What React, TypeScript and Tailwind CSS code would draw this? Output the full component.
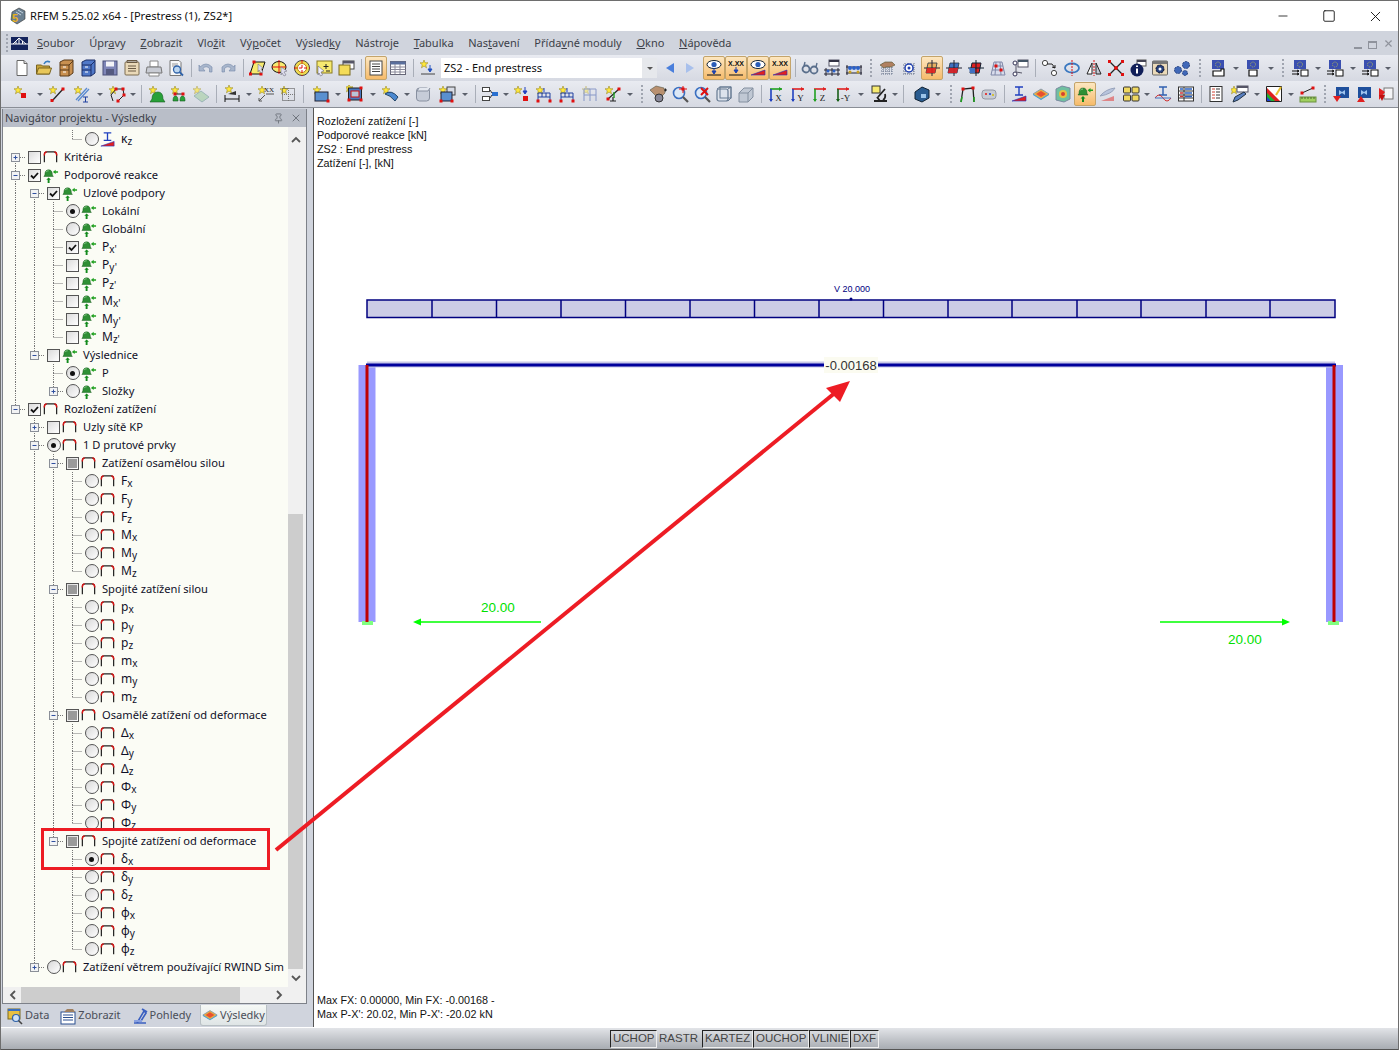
import type { ReactNode } from "react"
import { Minus, Square, X, Pin } from "lucide-react"

const Star = ({ x = 4, y = 4 }: { x?: number; y?: number }) => (
  <polygon
    points="0,-4 1,-1.2 4,-1.2 1.7,0.8 2.5,3.8 0,2 -2.5,3.8 -1.7,0.8 -4,-1.2 -1,-1.2"
    transform={`translate(${x} ${y})`}
    fill="#ffe83a"
    stroke="#9a8a20"
    strokeWidth="0.6"
  />
)
const Dot = ({ x, y }: { x: number; y: number }) => <rect x={x - 1.5} y={y - 1.5} width="3" height="3" fill="#e01010" />
const Flag = () => (
  <>
    <rect x="3" y="1" width="12" height="9" fill="#3a4fb0" />
    <circle cx="9" cy="5.5" r="2.5" fill="none" stroke="#a8b060" strokeDasharray="1 1" />
  </>
)
const Sup = () => (
  <>
    <path d="M3 8.5Q3 3 7 3Q11 3 11 8.5L12 10H2z" fill="#2f8f35" stroke="#14591a" strokeWidth="0.5" />
    <path d="M4.5 5Q5.5 4 7 4" stroke="#8fd090" fill="none" />
    <path d="M6 17v-3.5H4.5L7 11l2.5 2.5H8V17z" fill="#128a1c" />
    <path d="M17 4.5h-2.5V3l-3 2.2 3 2.3V6H17z" fill="#20a020" />
  </>
)
const Wedge = () => <path d="M2 16L16 11v5z" fill="#e02020" stroke="#2030c0" strokeWidth="0.6" />
const Ibeam = ({ c = "#2040c0" }: { c?: string }) => <path d="M5 2h8M9 2v8M5 10h8" stroke={c} strokeWidth="1.4" fill="none" />
const Eye = () => (
  <>
    <ellipse cx="9" cy="5.5" rx="7" ry="4" fill="#fff" stroke="#123" />
    <circle cx="9" cy="5.5" r="2.6" fill="#2a5db8" />
  </>
)
const Xxx = () => <text x="9" y="6.5" fontSize="7" textAnchor="middle" fill="#111" fontFamily="Liberation Sans" fontWeight="700">X.XX</text>
const Mesh = () => (
  <path d="M3 6h12M3 9h12M3 12h12M3 15h12M5 4v12M8 4v12M11 4v12M14 4v12" stroke="#66728a" strokeDasharray="1 1" fill="none" />
)
const Plane = ({ c = "#4070c0" }: { c?: string }) => (
  <>
    <path d="M5 4h9l-2 10H3z" fill={c} stroke="#234" strokeWidth="0.8" />
    <path d="M9 1v16M1 9h16" stroke="#223" strokeWidth="1" />
    <path d="M4 9h9l-1 5H3z" fill="#e02020" opacity=".9" />
  </>
)
const Mag = ({ c = "#3a6fc0" }: { c?: string }) => (
  <>
    <circle cx="8" cy="8" r="5.5" fill="#dce8f6" stroke={c} strokeWidth="1.6" />
    <path d="M12 12l5 5" stroke="#555" strokeWidth="2.2" />
  </>
)
const Axes = ({ t, a, b }: { t: string; a: string; b: string }) => (
  <>
    <path d="M3 4h12" stroke={a} strokeWidth="1.6" />
    <path d="M15 4l-3-2v4z" fill={a} />
    <path d="M4 4v12" stroke={b} strokeWidth="1.6" />
    <path d="M4 17l-2-3h4z" fill={b} />
    <text x="11.5" y="16" fontSize="9" textAnchor="middle" fontFamily="Liberation Serif" fill="#222">{t}</text>
  </>
)
const EuBlue = () => (
  <>
    <rect x="4" y="2" width="13" height="11" fill="#1e4f9c" />
    <path d="M7 5l3 2 3-2v5l-3-2-3 2z" fill="#9fc4ee" />
  </>
)

const ic: Record<string, ReactNode> = {
  page: <><path d="M4 1.5h7l3 3v12H4z" fill="#fff" stroke="#666" /><path d="M11 1.5v3h3" fill="#ddd" stroke="#666" /></>,
  open: <><path d="M1.5 15V6h5l1 1h7v8z" fill="#c9a63a" stroke="#7a6420" /><path d="M1.5 15l2-6h13l-2 6z" fill="#e8c75a" stroke="#7a6420" /><path d="M9 5Q11 1 15 3" stroke="#3a7fc0" strokeWidth="1.6" fill="none" /></>,
  cabO: <><path d="M3 3l4-2h9v13l-4 3H3z" fill="#c99050" stroke="#5a3a18" /><path d="M3 6h9M3 11h9M12 6v11M12 6l4-4" stroke="#5a3a18" fill="none" /><path d="M6 8h3M6 13h3" stroke="#fff" /></>,
  cabB: <><path d="M3 3l4-2h9v13l-4 3H3z" fill="#5078c8" stroke="#1c2f66" /><path d="M3 6h9M3 11h9M12 6v11M12 6l4-4" stroke="#1c2f66" fill="none" /><path d="M6 8h3M6 13h3" stroke="#fff" /></>,
  save: <><rect x="2" y="2" width="14" height="14" fill="#7f86b8" stroke="#4a4f78" /><rect x="5" y="2.5" width="8" height="5" fill="#f4f4f8" /><rect x="5" y="10" width="8" height="6" fill="#555a80" /></>,
  clip: <><rect x="2" y="3" width="14" height="13" rx="1" fill="#ead9b8" stroke="#7c6c50" /><path d="M4 1.5h10v2H4zM5 7h8M5 9.5h8M5 12h8" stroke="#6a5a44" fill="none" /></>,
  print: <><path d="M5 2h8v6H5z" fill="#fff" stroke="#888" /><path d="M2 8h14l1 6H1z" fill="#c9ccd4" stroke="#777" /><path d="M4 14h10v3H4z" fill="#fff" stroke="#888" /></>,
  prev: <><path d="M3 1.5h9l2 2v13H3z" fill="#f8f8f8" stroke="#777" /><path d="M5 5h6M5 7h5" stroke="#999" /><circle cx="10" cy="10.5" r="3.5" fill="#bcd6f0" stroke="#2f62a8" strokeWidth="1.3" /><path d="M12.5 13l3.5 3.5" stroke="#2f62a8" strokeWidth="1.8" /></>,
  undo: <><path d="M3 8Q9 2 15 8v5h-2.5V9.5Q9 6 6 9.5L8 12H2V6z" fill="#a8b6cc" stroke="#7488a8" strokeWidth="0.6" /></>,
  redo: <><path d="M15 8Q9 2 3 8v5h2.5V9.5Q9 6 12 9.5L10 12h6V6z" fill="#a8b6cc" stroke="#7488a8" strokeWidth="0.6" /></>,
  para: <><path d="M5 3h11l-4 12H1z" fill="#f6ea70" stroke="#111" /><Dot x={5} y={3} /><Dot x={1.5} y={15} /><Dot x={12} y={15} /><path d="M9 5l5 4-2 1 2 3-2 1-2-3-1 2z" fill="#dde" stroke="#667" strokeWidth="0.5" /></>,
  ell: <><ellipse cx="8" cy="8" rx="7" ry="5.5" fill="#f6ea70" stroke="#111" /><path d="M8 1v14M1 8h14" stroke="#e01010" /><path d="M10 8l6 4-3 1 2 3-2 1-2-3-1 2z" fill="#dde" stroke="#667" strokeWidth="0.5" /></>,
  target: <><circle cx="9" cy="9" r="7.5" fill="#f0dc50" stroke="#444" /><circle cx="9" cy="9" r="4.5" fill="#fff" stroke="#c08010" /><path d="M9 1v16M1 9h16" stroke="#e01010" strokeDasharray="3 2" /></>,
  note: <><rect x="2" y="2" width="15" height="12" fill="#f6ea70" stroke="#8a7a20" /><path d="M11 5v5M8.5 7.5h5M11 12h4" stroke="#222" /><path d="M3 7l6 5-3 1 1.5 3-2 1-1.5-3-1 2z" fill="#eef" stroke="#556" strokeWidth="0.5" /></>,
  wins: <><rect x="6" y="2" width="11" height="8" fill="#fff" stroke="#444" /><rect x="6" y="2" width="11" height="2.5" fill="#556" /><rect x="2" y="6" width="11" height="10" fill="#f4dc58" stroke="#7a6a20" /></>,
  list: <><rect x="3" y="2" width="12" height="14" fill="#fff" stroke="#444" /><path d="M5 5h8M5 7.5h8M5 10h8M5 12.5h8" stroke="#444" /></>,
  table: <><rect x="1.5" y="2.5" width="15" height="13" fill="#fff" stroke="#667" /><rect x="1.5" y="2.5" width="15" height="3" fill="#5a6f9c" /><path d="M1.5 8h15M1.5 10.5h15M1.5 13h15M6 5v10M11 5v10" stroke="#889" /></>,
  load: <><Star x={5} y={5} /><path d="M11 6v6M9 10l2 3 2-3z" stroke="#2050c0" fill="#2050c0" /><path d="M2 15h14" stroke="#444" /></>,
  eyeL: <><Eye /><path d="M9 9v5M7 12l2 3 2-3z" stroke="#1a40b0" fill="#1a40b0" /><path d="M2 16h14" stroke="#111" /></>,
  xxL: <><Xxx /><path d="M9 8v5M7 11l2 3 2-3z" stroke="#1a40b0" fill="#1a40b0" /><path d="M2 16h14" stroke="#111" /></>,
  eyeW: <><Eye /><Wedge /></>,
  xxW: <><Xxx /><Wedge /></>,
  glass: <><circle cx="5" cy="10" r="3.5" fill="none" stroke="#5a6f8c" strokeWidth="1.8" /><circle cx="13" cy="11" r="3.5" fill="none" stroke="#5a6f8c" strokeWidth="1.8" /><path d="M3 7l1-4M15 8l1-4M8 10h2" stroke="#5a6f8c" strokeWidth="1.4" /></>,
  tbm1: <><rect x="6" y="1" width="10" height="6" fill="#fff" stroke="#556" /><rect x="6" y="1" width="10" height="2" fill="#334" /><path d="M1 11h16M1 15h16M3 9v8M9 9v8M15 9v8" stroke="#223" /><circle cx="5" cy="12" r="1.5" fill="#2a60c8" /><circle cx="11" cy="12" r="1.5" fill="#2a60c8" /></>,
  tbm2: <><path d="M1 8h16M1 14h16M2 6v10M16 6v10" stroke="#223" /><circle cx="5" cy="9" r="2" fill="#2a60c8" /><circle cx="9" cy="9" r="2" fill="#2a60c8" /><circle cx="13" cy="9" r="2" fill="#2a60c8" /><circle cx="5" cy="13" r="1.5" fill="#c8a020" /><circle cx="13" cy="13" r="1.5" fill="#c8a020" /></>,
  hand: <><Mesh /><path d="M2 6l5-3 7 0 3 3-4 2-5 0-2 1z" fill="#b08060" stroke="#553" strokeWidth="0.6" /></>,
  gearM: <><Mesh /><circle cx="9" cy="9" r="4" fill="#fff" stroke="#2040b0" strokeWidth="1.5" /><circle cx="9" cy="9" r="1.5" fill="#2040b0" /></>,
  plA: <Plane c="#e8b060" />,
  plB: <Plane />,
  plC: <><path d="M5 4h9l-2 10H3z" fill="#e02020" stroke="#123" /><path d="M9 1v16M1 9h16" stroke="#123" /><path d="M2 9h6v5H3z" fill="#4070c0" /></>,
  grid: <><path d="M5 3h8l3 13H2z" fill="#d8dcec" stroke="#8088a8" /><path d="M4 7h10M3 11h12M7 3l-1 13M11 3l1 13" stroke="#8088a8" /><Dot x={7} y={7} /><Dot x={12} y={11} /></>,
  sciss: <><rect x="7" y="1" width="10" height="7" fill="#fff" stroke="#556" /><rect x="7" y="1" width="10" height="2" fill="#456" /><circle cx="4" cy="4" r="2" fill="#fff" stroke="#335" /><circle cx="4" cy="15" r="2" fill="#fff" stroke="#335" /><path d="M5 6v7l6 1" stroke="#556" fill="none" /></>,
  nodes: <><circle cx="4" cy="4" r="2.6" fill="#fff" stroke="#444" /><circle cx="13" cy="14" r="2.6" fill="#fff" stroke="#444" /><path d="M6 5h5l3 4M14 9l-3-1M14 9l0-3" stroke="#222" fill="none" /></>,
  rot: <><ellipse cx="9" cy="9" rx="7" ry="4.5" fill="none" stroke="#3a78c0" strokeWidth="1.8" /><path d="M9 1v16" stroke="#e01010" strokeDasharray="2 1" /></>,
  mirror: <><path d="M7 4L2 15h5z" fill="#fff" stroke="#222" /><path d="M11 4l5 11h-5z" fill="#c4cad6" stroke="#222" /><path d="M9 1v16" stroke="#e01010" strokeDasharray="2 1" /></>,
  cross: <><path d="M3 3l12 12M15 3L3 15" stroke="#222" strokeWidth="1.3" /><Dot x={2.5} y={2.5} /><Dot x={15.5} y={2.5} /><Dot x={2.5} y={15.5} /><Dot x={15.5} y={15.5} /><circle cx="9" cy="9" r="2" fill="#e01010" /></>,
  info: <><rect x="8" y="1" width="9" height="6" fill="#fff" stroke="#555" /><rect x="8" y="1" width="9" height="2" fill="#445" /><circle cx="8" cy="11" r="6.5" fill="#101e58" /><path d="M8 6.5v1.5M8 9.5v5" stroke="#fff" strokeWidth="2" /></>,
  gbox: <><rect x="1.5" y="2" width="15" height="14" rx="1" fill="#ead9b8" stroke="#666" /><rect x="1.5" y="2" width="15" height="3" fill="#777" /><circle cx="9" cy="10" r="4" fill="#26407c" stroke="#112" strokeDasharray="2 1" /><circle cx="9" cy="10" r="1.5" fill="#fff" /></>,
  gears: <><circle cx="5" cy="11" r="3.5" fill="#4068b8" stroke="#26407c" strokeDasharray="2 1" /><circle cx="13" cy="6" r="3.5" fill="#4068b8" stroke="#26407c" strokeDasharray="2 1" /><circle cx="12" cy="14" r="2.5" fill="#4068b8" stroke="#26407c" strokeDasharray="2 1" /></>,
  fl1: <><Flag /><path d="M4 17v-5h8v-2h3v7z" fill="#fff" stroke="#111" strokeWidth="1.2" /></>,
  fl2: <><Flag /><path d="M5 17v-6h8v6z" fill="#fff" stroke="#111" strokeWidth="1.2" /></>,
  fl3: <><Flag /><path d="M1 12h7M1 15h7M6 11l2 1-2 1M6 14l2 1-2 1" stroke="#111" fill="none" /><rect x="10" y="11" width="7" height="6" fill="#fff" stroke="#111" /></>,

  sNode: <><Star x={5} y={5} /><rect x="8" y="8" width="5" height="5" fill="#e01010" /></>,
  sLine: <><Star x={5} y={5} /><path d="M4 16L15 4" stroke="#222" strokeWidth="1.3" /><Dot x={4} y={15.5} /><Dot x={15} y={4} /></>,
  sDbl: <><Star x={5} y={5} /><path d="M3 15L14 3M5 16L16 4" stroke="#5a8ad0" strokeWidth="1.3" /><path d="M10 12h5M12.5 12v5M10 17h5" stroke="#2040a0" /></>,
  sPoly: <><Star x={5} y={5} /><path d="M5 16L3 10 8 4h7l1 6-6 6" stroke="#222" fill="none" /><Dot x={8} y={4} /><Dot x={15} y={4} /><Dot x={16} y={10} /><Dot x={10} y={16} /></>,
  sSup: <><Star x={5} y={5} /><path d="M4 14Q4 7 10 7Q15 7 15 14l2 3H2z" fill="#28a038" stroke="#145c20" strokeWidth="0.6" /></>,
  sSup2: <><Star x={5} y={5} /><path d="M3 16Q3 11 5.5 11Q8 11 8 16zM10 16Q10 11 12.5 11Q15 11 15 16z" fill="#28a038" stroke="#145c20" strokeWidth="0.6" /><path d="M5 9h8" stroke="#222" /><Dot x={5} y={9} /><Dot x={13} y={9} /></>,
  sSurf: <g opacity=".65"><Star x={5} y={5} /><path d="M2 11l7-5 8 6-7 5z" fill="#a8d0a8" stroke="#7aa0a0" /></g>,
  sDim: <><Star x={6} y={4} /><path d="M2 10v7M16 10v7M2 14h14" stroke="#111" /><path d="M5 9l8-3v4z" fill="#333" /></>,
  sXx: <><Star x={5} y={5} /><text x="12" y="7" fontSize="7" textAnchor="middle" fontFamily="Liberation Serif" fill="#222">XX</text><path d="M2 16l6-6M2 16v-3M2 16h3M9 9h8" stroke="#555" /></>,
  sDots: <><Star x={5} y={5} /><rect x="3.5" y="3.5" width="12" height="12" fill="none" stroke="#444" strokeDasharray="1 1" /><path d="M9.5 3v13M3 9.5h13" stroke="#777" strokeDasharray="1 1" /></>,
  sRect: <><Star x={5} y={5} /><rect x="3" y="7" width="13" height="9" fill="#5a90d0" stroke="#223" /><Dot x={16} y={16} /></>,
  bFrame: <><Star x={3} y={3} /><rect x="2.5" y="3" width="13" height="12" fill="#4a78c0" stroke="#222" /><rect x="5" y="6" width="8" height="6" fill="#b8c4d8" stroke="#d01010" /><Dot x={3} y={15} /><Dot x={15} y={15} /><Dot x={15} y={3} /></>,
  sCurve: <><Star x={5} y={5} /><path d="M4 9Q10 4 17 12l-3 4Q9 10 4 9z" fill="#4a88d0" stroke="#246" /></>,
  box: <><rect x="2.5" y="3" width="13" height="13" rx="3" fill="#c6ccd8" stroke="#8890a0" /><path d="M5 3l-2 3h11l2-3" fill="#e4e8f0" stroke="#8890a0" /></>,
  sBoxes: <><Star x={5} y={5} /><rect x="9" y="2" width="8" height="8" fill="#d8dce6" stroke="#444" /><rect x="3" y="7" width="11" height="9" fill="#5a90d0" stroke="#223" /><Dot x={3} y={16} /><Dot x={14} y={16} /></>,
  boxArr: <><rect x="1.5" y="2.5" width="7" height="4" fill="#fff" stroke="#444" /><rect x="1.5" y="11.5" width="7" height="4" fill="#fff" stroke="#444" /><rect x="11" y="7" width="6" height="4" fill="#2a70d0" /><path d="M9 5l2 3M9 13l2-3" stroke="#333" /></>,
  sLoad: <><Star x={5} y={5} /><path d="M12 2v6M10 6l2 3 2-3z" stroke="#2040c0" fill="#2040c0" /><rect x="10" y="11" width="5" height="5" fill="#e01010" /></>,
  sLf: <><Star x={5} y={5} /><path d="M3 16V8h12v8M3 12h12M7 8v4M11 8v4" stroke="#2040a0" fill="none" /><path d="M9 3v4" stroke="#2040c0" /><Dot x={3} y={16} /><Dot x={15} y={16} /></>,
  sLf2: <g opacity=".45"><Star x={5} y={5} /><path d="M3 16V4h12v12M3 10h12M9 4v12" stroke="#2040a0" fill="none" /></g>,
  sX: <><Star x={5} y={5} /><path d="M4 14L15 4M9 12v4M6 16h6" stroke="#222" strokeWidth="1.2" /><Dot x={15} y={4} /><Dot x={4} y={14} /><path d="M10 7v6" stroke="#20a020" strokeWidth="1.4" /></>,
  handC: <><path d="M1 5l6-4 8 2 1 5-3 3-6 0z" fill="#b89070" stroke="#554" strokeWidth="0.6" /><circle cx="10" cy="13" r="4" fill="#889" stroke="#333" /><path d="M15 5h3M16.5 3.5v3" stroke="#222" /></>,
  magR: <><Mag /><path d="M8 4h8M12 1v7" stroke="#e01010" /><Dot x={12} y={4} /></>,
  magX: <><Mag /><path d="M8 3l7 7M15 3l-7 7" stroke="#e01010" strokeWidth="2" /></>,
  wire: <><rect x="2" y="4" width="11" height="12" rx="2" fill="#dde3ec" stroke="#667a92" strokeWidth="1.2" /><path d="M5 2h11v11M2 4l3-2M13 4l3-2M13 16l3-3" stroke="#667a92" fill="none" /><rect x="5" y="2" width="11" height="11" fill="none" stroke="#667a92" /></>,
  cube: <><path d="M2 8l5-5h9v9l-5 5H2z" fill="#c0c8d4" stroke="#8490a0" /><path d="M2 8h9v9M11 8l5-5" stroke="#8490a0" fill="none" /></>,
  axX: <Axes t="X" a="#20a020" b="#2040c0" />,
  axY: <Axes t="Y" a="#e02020" b="#2040c0" />,
  axZ: <Axes t="Z" a="#e02020" b="#20a020" />,
  axmY: <Axes t="-Y" a="#e02020" b="#186018" />,
  micro: <><rect x="1" y="1" width="8" height="7" fill="#f6ea70" stroke="#333" /><path d="M14 4L7 12M3 16h13M6 12l3 4M14 9q1 4-2 6" stroke="#222" strokeWidth="1.8" fill="none" /></>,
  blueC: <><path d="M2 7l7-5 7 3v8l-7 4-7-3z" fill="#2a5c90" stroke="#123" /><path d="M8 9h5v4H8z" fill="#9cc4e8" /></>,
  arch: <><path d="M3 17L5 4l10-1 1 14" stroke="#222" strokeWidth="1.3" fill="none" /><Dot x={5} y={4} /><Dot x={15} y={3} /><path d="M3 17l1-5M16 17v-5" stroke="#20a020" strokeWidth="1.6" /></>,
  pill: <><rect x="2" y="5" width="14" height="9" rx="3" fill="#c8ccd4" stroke="#9298a4" /><rect x="5" y="8" width="2" height="2" fill="#e04040" /><rect x="9" y="8" width="2" height="2" fill="#4060d0" /><rect x="12" y="9" width="2" height="2" fill="#d0c040" /></>,
  ibW: <><Ibeam /><Wedge /></>,
  rain: <><path d="M1 9l8-5 8 5-8 5z" fill="#e8b040" stroke="#8a9cb0" /><path d="M4 9l5-3 5 3-5 3z" fill="#e85030" /><path d="M1 9l8 5 8-5v1l-8 5-8-5z" fill="#40a0d0" /></>,
  rainC: <><path d="M2 4l6-3 8 2v11l-6 3-8-2z" fill="#70c0a0" stroke="#7a8aa0" /><circle cx="9" cy="9" r="4" fill="#e8c040" /><circle cx="9" cy="9" r="2" fill="#d84030" /></>,
  supA: <><Sup /></>,
  lens: <g opacity=".7"><path d="M3 16L16 11v5z" fill="#e06060" /><path d="M2 11Q8 4 17 3Q14 9 2 11z" fill="#a8b8d8" stroke="#7888a8" /></g>,
  blocks: <><rect x="1.5" y="2" width="7" height="6" rx="1" fill="#f0d860" stroke="#333" /><rect x="10" y="2" width="7" height="6" rx="1" fill="#f0d860" stroke="#333" /><rect x="1.5" y="10" width="7" height="6" rx="1" fill="#f0d860" stroke="#333" /><rect x="10" y="10" width="7" height="6" rx="1" fill="#f0d860" stroke="#333" /></>,
  ibS: <><Ibeam c="#3060b0" /><path d="M1 13q4-6 8 0t8 0" fill="none" stroke="#d03030" /><path d="M1 13h16" stroke="#4070c0" /></>,
  tblC: <><rect x="1.5" y="2" width="15" height="14" fill="#fff" stroke="#333" /><path d="M1.5 6h15M1.5 10h15M1.5 13h15M7 2v14" stroke="#333" /><path d="M3 4h3M8 4h7M8 8h7M8 11.5h7" stroke="#2a60c0" strokeWidth="1.3" /><path d="M3 8h3M3 11.5h3" stroke="#d03030" strokeWidth="1.3" /></>,
  report: <><rect x="3" y="1.5" width="12" height="15" fill="#fff" stroke="#333" /><path d="M5 4h3M5 7h3M5 10h3M5 13h3" stroke="#d04030" /><path d="M9 4h4M9 7h4M9 10h4M9 13h4" stroke="#333" /></>,
  winPen: <><Star x={3} y={5} /><rect x="6" y="1" width="11" height="6" fill="#fff" stroke="#556" /><rect x="6" y="1" width="11" height="2" fill="#556" /><path d="M2 17l2-5 9-5 2 2-8 6z" fill="#5a7fc0" stroke="#234" /></>,
  rTri: <><path d="M1.5 1.5h15v15h-15z" fill="#fff" stroke="#222" /><path d="M2 3l13 13H2z" fill="#e02020" /><path d="M2 8l8 8H2z" fill="#20b030" /><path d="M2 12l4 4H2z" fill="#2040d0" /><path d="M11 10l5-8" stroke="#e8c030" strokeWidth="2" /></>,
  ruler: <><rect x="1" y="12" width="16" height="5" fill="#a0d060" stroke="#6a9040" /><path d="M3 12v2M6 12v2M9 12v2M12 12v2M15 12v2" stroke="#4a6a30" /><path d="M3 8l11-5" stroke="#222" /><Dot x={3} y={8} /><Dot x={14} y={3} /></>,
  eu1: <><EuBlue /><path d="M1 11h8l-4 6z" fill="#e02020" /></>,
  eu2: <><EuBlue /><path d="M5 17h8l-4-6z" fill="#e02020" transform="translate(-2 0)" /></>,
  eu3: <><rect x="8" y="3" width="9" height="11" fill="#f4f4f6" stroke="#777" /><path d="M3 3l6 4-6 8z" fill="#e02020" /><path d="M3 10h6l-3 6z" fill="#c01010" /></>,
}

const B = ({ n, on }: { n: string; on?: boolean }) => (
  <div
    className={
      on
        ? "flex h-[24px] w-[22px] shrink-0 items-center justify-center rounded-[2px] border border-[#c4a46a] bg-linear-to-b from-[#fde7c0] to-[#f6bb6a]"
        : "flex h-[24px] w-[22px] shrink-0 items-center justify-center"
    }
  >
    <svg width="18" height="18" viewBox="0 0 18 18">{ic[n]}</svg>
  </div>
)
const D = ({ w = "w-[13px]" }: { w?: string }) => (
  <div className={`flex h-[24px] shrink-0 items-center justify-center ${w}`}>
    <div className="h-0 w-0 border-x-[3px] border-t-[3px] border-x-transparent border-t-[#5a5f6a]" />
  </div>
)
const Sep = () => (
  <div className="flex h-[24px] w-[8px] shrink-0 items-center justify-center">
    <div className="h-[18px] w-px bg-[#a9aeb8]" />
  </div>
)
const Grip = ({ w = "w-[11px]" }: { w?: string }) => (
  <div className={`flex h-[24px] shrink-0 flex-col items-center justify-center gap-[2px] ${w}`}>
    {[0, 1, 2, 3, 4].map((i) => (
      <div key={i} className="h-[2px] w-[2px] bg-[#a0a5b0]" />
    ))}
  </div>
)
const Gap = ({ w }: { w: string }) => <div className={`shrink-0 ${w}`} />

const bar = "flex h-[26px] items-center bg-linear-to-b from-[#e9ebf1] to-[#d6d9e2] pl-[10px]"

function Toolbar1() {
  return (
    <div className={bar}>
      {["page", "open", "cabO", "cabB", "save", "clip", "print", "prev"].map((n) => <B key={n} n={n} />)}
      <Sep />
      <B n="undo" />
      <B n="redo" />
      <Sep />
      {["para", "ell", "target", "note", "wins"].map((n) => <B key={n} n={n} />)}
      <Sep />
      <B n="list" on />
      <B n="table" />
      <Sep />
      <B n="load" />
      <div className="ml-[2px] flex h-[20px] w-[216px] shrink-0 items-center justify-between bg-white pl-[3px] text-[11px] text-[#111]">
        <span>ZS2 - End prestress</span>
        <div className="flex h-[20px] w-[15px] items-center justify-center bg-[#e6e8ec]">
          <div className="h-0 w-0 border-x-[3px] border-t-[3px] border-x-transparent border-t-[#555]" />
        </div>
      </div>
      <div className="flex w-[46px] shrink-0 items-center justify-center gap-[12px]">
        <div className="h-0 w-0 border-y-[5px] border-r-[8px] border-y-transparent border-r-[#4a7fdc]" />
        <div className="h-0 w-0 border-y-[5px] border-l-[8px] border-y-transparent border-l-[#a8c0ec]" />
      </div>
      {["eyeL", "xxL", "eyeW", "xxW"].map((n) => <B key={n} n={n} on />)}
      <Sep />
      {["glass", "tbm1", "tbm2"].map((n) => <B key={n} n={n} />)}
      <Grip />
      <B n="hand" />
      <B n="gearM" />
      <Gap w="w-px" />
      <B n="plA" on />
      <B n="plB" />
      <B n="plC" />
      <B n="grid" />
      <B n="sciss" />
      <Sep />
      {["nodes", "rot", "mirror", "cross", "info", "gbox", "gears"].map((n) => <B key={n} n={n} />)}
      <Grip w="w-[14px]" />
      <B n="fl1" /><D />
      <B n="fl2" /><D />
      <Grip w="w-[12px]" />
      <B n="fl3" /><D />
      <B n="fl3" /><D />
      <B n="fl3" /><D />
    </div>
  )
}

function Toolbar2() {
  return (
    <div className={bar}>
      <B n="sNode" /><D />
      <B n="sLine" /><Gap w="w-[3px]" />
      <B n="sDbl" /><D />
      <B n="sPoly" /><D w="w-[9px]" />
      <Sep /><Gap w="w-px" />
      <B n="sSup" /><B n="sSup2" /><B n="sSurf" />
      <Sep /><Gap w="w-px" />
      <B n="sDim" /><D w="w-[12px]" />
      <B n="sXx" /><B n="sDots" />
      <Sep /><Gap w="w-[3px]" />
      <B n="sRect" /><D w="w-[12px]" />
      <B n="bFrame" /><D />
      <B n="sCurve" /><D w="w-[11px]" />
      <B n="box" /><Gap w="w-[2px]" />
      <B n="sBoxes" /><D />
      <Sep />
      <B n="boxArr" /><D w="w-[10px]" />
      <B n="sLoad" /><B n="sLf" /><Gap w="w-px" />
      <B n="sLf" /><Gap w="w-px" />
      <B n="sLf2" /><Gap w="w-px" />
      <B n="sX" /><D w="w-[12px]" />
      <Grip />
      <B n="handC" /><B n="magR" /><B n="magX" /><B n="wire" /><B n="cube" />
      <Sep />
      <B n="axX" /><B n="axY" /><B n="axZ" /><Gap w="w-px" />
      <B n="axmY" /><D />
      <Gap w="w-[2px]" />
      <B n="micro" /><D w="w-[8px]" />
      <Sep />
      <Gap w="w-[4px]" />
      <B n="blueC" /><D w="w-[10px]" />
      <Gap w="w-[2px]" />
      <Grip />
      <B n="arch" /><B n="pill" />
      <Sep />
      <B n="ibW" /><B n="rain" /><B n="rainC" /><B n="supA" on /><B n="lens" />
      <Gap w="w-[2px]" />
      <B n="blocks" /><D w="w-[10px]" />
      <B n="ibS" /><Gap w="w-px" />
      <B n="tblC" />
      <Sep />
      <B n="report" /><Gap w="w-[2px]" />
      <B n="winPen" /><D w="w-[12px]" />
      <B n="rTri" /><D w="w-[12px]" />
      <B n="ruler" />
      <Grip />
      <B n="eu1" /><B n="eu2" /><B n="eu3" />
    </div>
  )
}

const menu: [string, string, string][] = [
  ["", "S", "oubor"],
  ["Úpr", "a", "vy"],
  ["", "Z", "obrazit"],
  ["Vlo", "ž", "it"],
  ["Vý", "p", "očet"],
  ["Výsled", "k", "y"],
  ["Nástro", "j", "e"],
  ["", "T", "abulka"],
  ["Nas", "t", "avení"],
  ["Přída", "v", "né moduly"],
  ["", "O", "kno"],
  ["", "N", "ápověda"],
]

function MenuBar() {
  return (
    <div className="flex h-[24px] items-center bg-[#d0d4dd] pl-[3px] text-[11px] text-[#3c3f48]">
      <Grip w="w-[6px]" />
      <svg width="17" height="13" viewBox="0 0 17 13" className="ml-[1px] mr-[9px] shrink-0">
        <rect width="17" height="13" fill="#14245c" />
        <path d="M0 7h17M2 7l6-6 7 6M8 1v6M5 4.5V7M11.5 4V7" stroke="#fff" strokeWidth="1" fill="none" />
      </svg>
      <div className="flex gap-[14.7px]">
        {menu.map(([a, u, b]) => (
          <span key={a + u + b} className="whitespace-nowrap">
            {a}
            <span className="underline">{u}</span>
            {b}
          </span>
        ))}
      </div>
      <div className="ml-auto mr-[4px] flex items-end gap-[6px] text-[#9a9ea8]">
        <div className="mt-[6px] h-[2px] w-[8px] bg-[#8f939c]" />
        <div className="h-[8px] w-[9px] border border-t-2 border-[#8f939c]" />
        <X size={11} strokeWidth={2.5} color="#8f939c" />
      </div>
    </div>
  )
}

type Row = [string, "r" | "R" | "c" | "C" | "i", "frame" | "sup" | "beam", string, string?]

const group = (names: [string, string][]): Row[] =>
  names.map(([a, b], i) => [" ||" + (i === names.length - 1 ? "L" : "T"), "r", "frame", a, b])

const rows: Row[] = [
  ["   L", "r", "beam", "κ", "z"],
  ["P", "c", "frame", "Kritéria"],
  ["-", "C", "sup", "Podporové reakce"],
  ["|M", "C", "sup", "Uzlové podpory"],
  ["||T", "R", "sup", "Lokální"],
  ["||T", "r", "sup", "Globální"],
  ["||T", "C", "sup", "P", "x'"],
  ["||T", "c", "sup", "P", "y'"],
  ["||T", "c", "sup", "P", "z'"],
  ["||T", "c", "sup", "M", "x'"],
  ["||T", "c", "sup", "M", "y'"],
  ["||L", "c", "sup", "M", "z'"],
  ["|U", "c", "sup", "Výslednice"],
  ["| T", "R", "sup", "P"],
  ["| V", "r", "sup", "Složky"],
  ["U", "C", "frame", "Rozložení zatížení"],
  [" +", "c", "frame", "Uzly sítě KP"],
  [" -", "R", "frame", "1 D prutové prvky"],
  [" |-", "i", "frame", "Zatížení osamělou silou"],
  ...group([["F", "x"], ["F", "y"], ["F", "z"], ["M", "x"], ["M", "y"], ["M", "z"]]),
  [" |-", "i", "frame", "Spojité zatížení silou"],
  ...group([["p", "x"], ["p", "y"], ["p", "z"], ["m", "x"], ["m", "y"], ["m", "z"]]),
  [" |-", "i", "frame", "Osamělé zatížení od deformace"],
  ...group([["Δ", "x"], ["Δ", "y"], ["Δ", "z"], ["Φ", "x"], ["Φ", "y"], ["Φ", "z"]]),
  [" |U", "i", "frame", "Spojité zatížení od deformace"],
  [" | T", "R", "frame", "δ", "x"],
  [" | T", "r", "frame", "δ", "y"],
  [" | T", "r", "frame", "δ", "z"],
  [" | T", "r", "frame", "φ", "x"],
  [" | T", "r", "frame", "φ", "y"],
  [" | L", "r", "frame", "φ", "z"],
  [" V", "r", "frame", "Zatížení větrem používající RWIND Sim"],
]

const dots = { stroke: "#777", strokeDasharray: "1 1", fill: "none" }

function Guide({ t }: { t: string }) {
  const plus = "+PV".includes(t)
  const box = "+-PMUV".includes(t)
  const up = "|TL+-UV".includes(t)
  const down = "|T+-PM".includes(t)
  return (
    <svg width="19" height="18" viewBox="0 0 19 18" className="shrink-0">
      {up && <path d="M9.5 0v9" {...dots} />}
      {down && <path d="M9.5 9v9" {...dots} />}
      {"TL".includes(t) && <path d="M9.5 9.5H19" {...dots} />}
      {box && (
        <>
          <path d="M14 9.5h5" {...dots} />
          <rect x="5.5" y="5.5" width="8" height="8" fill="#f2f3f4" stroke="#8a8f98" />
          <path d="M7.5 9.5h4" stroke="#3050a0" />
          {plus && <path d="M9.5 7.5v4" stroke="#3050a0" />}
        </>
      )}
    </svg>
  )
}

function Control({ k }: { k: Row[1] }) {
  if (k === "r" || k === "R")
    return (
      <div className="flex h-[14px] w-[14px] items-center justify-center rounded-full border border-[#555] bg-linear-to-br from-[#d8d8d8] to-white">
        {k === "R" && <div className="h-[5px] w-[5px] rounded-full bg-[#111]" />}
      </div>
    )
  return (
    <div className="flex h-[13px] w-[13px] items-center justify-center border border-[#555] bg-linear-to-br from-[#dcdcdc] to-white">
      {k === "C" && (
        <svg width="9" height="9" viewBox="0 0 9 9">
          <path d="M1 4.5l2.5 2.5L8 2" stroke="#111" strokeWidth="1.8" fill="none" />
        </svg>
      )}
      {k === "i" && <div className="h-[9px] w-[9px] bg-[#9a9a9a]" />}
    </div>
  )
}

function TreeIcon({ k }: { k: Row[2] }) {
  return (
    <svg width="17" height="17" viewBox="0 0 18 18" className="-ml-[2px] shrink-0">
      {k === "frame" && (
        <>
          <path d="M2.5 14V6Q2.5 3 5.5 3h7q3 0 3 3v8" fill="none" stroke="#222" strokeWidth="1.3" />
          <path d="M2.5 7V6Q2.5 3 5 3M13 3q2.5 0 2.5 3v1" fill="none" stroke="#e01010" strokeWidth="1.5" />
        </>
      )}
      {k === "sup" && <Sup />}
      {k === "beam" && (
        <>
          <Ibeam />
          <Wedge />
        </>
      )}
    </svg>
  )
}

function TreeRow({ r }: { r: Row }) {
  const [g, c, i, a, b] = r
  return (
    <div className="flex h-[18px] items-center whitespace-nowrap">
      {g.split("").map((t, n) => (
        <Guide key={n} t={t} />
      ))}
      <div className="flex w-[19px] shrink-0 justify-center">
        <Control k={c} />
      </div>
      <TreeIcon k={i} />
      <span className={b ? "ml-[5px] text-[12px]" : "ml-[5px]"}>
        {a}
        {b && <span className="relative top-[2px] text-[10px]">{b}</span>}
      </span>
    </div>
  )
}

const tabs: [string, ReactNode][] = [
  ["Data", <><rect x="2" y="2" width="12" height="10" fill="#e8c040" stroke="#7a6a20" /><rect x="2" y="2" width="12" height="2" fill="#3a6fc0" /><circle cx="10" cy="11" r="3.5" fill="#cfe0f4" stroke="#2f62a8" strokeWidth="1.2" /><path d="M12.5 13.5L16 17" stroke="#444" strokeWidth="1.6" /></>],
  ["Zobrazit", <><rect x="2" y="5" width="14" height="12" fill="#fff" stroke="#2a4f90" /><path d="M4 8h10M4 10.5h10M4 13h10" stroke="#2a4f90" /><path d="M5 5l3-3 6 0 2 3z" fill="#a08060" /></>],
  ["Pohledy", <><path d="M3 16h12M6 16l7-12 2 2-5 8" stroke="#3a5fc0" strokeWidth="1.6" fill="none" /><path d="M11 2l5 3" stroke="#3a5fc0" strokeWidth="2" /><path d="M3 14h8" stroke="#88a0e0" strokeWidth="2" /></>],
]

function LeftPanel() {
  return (
    <div className="flex w-[312px] shrink-0 flex-col pl-px pr-[6px]">
      <div className="mt-px flex h-[18px] items-center justify-between border-x border-[#7d8189] bg-[#b9bec8] pl-[2px] pr-[4px] text-[11px] text-[#3c3f48]">
        <span>Navigátor projektu - Výsledky</span>
        <div className="flex items-center gap-[6px]">
          <Pin size={11} color="#70757e" />
          <X size={12} color="#70757e" />
        </div>
      </div>
      <div className="flex h-[860px] border-x border-[#7d8189] bg-[#f0f0f0]">
        <div className="w-[285px] overflow-hidden bg-[#fbfcf5] pt-[3px] pl-[3px] text-[11.15px] text-[#101028]">
          {rows.map((r, i) => (
            <TreeRow key={i} r={r} />
          ))}
        </div>
        <div className="flex w-[15px] flex-col">
          <div className="flex h-[20px] items-start justify-center pt-[9px]">
            <svg width="10" height="7" viewBox="0 0 10 7"><path d="M1 6l4-4 4 4" stroke="#555" strokeWidth="1.8" fill="none" /></svg>
          </div>
          <div className="h-[367px]" />
          <div className="h-[455px] bg-[#cdcdcd]" />
          <div className="flex h-[18px] items-center justify-center">
            <svg width="10" height="7" viewBox="0 0 10 7"><path d="M1 1l4 4 4-4" stroke="#555" strokeWidth="1.8" fill="none" /></svg>
          </div>
        </div>
      </div>
      <div className="flex h-[17px] items-center border-x border-b border-[#7d8189] bg-[#f0f0f0]">
        <div className="flex w-[18px] shrink-0 justify-center">
          <svg width="7" height="10" viewBox="0 0 7 10"><path d="M6 1L2 5l4 4" stroke="#555" strokeWidth="1.8" fill="none" /></svg>
        </div>
        <div className="h-full w-[219px] shrink-0 bg-[#cdcdcd]" />
        <div className="flex w-[63px] shrink-0 pl-[36px]">
          <svg width="7" height="10" viewBox="0 0 7 10"><path d="M1 1l4 4-4 4" stroke="#555" strokeWidth="1.8" fill="none" /></svg>
        </div>
      </div>
      <div className="flex h-[23px] items-center pl-[4px] text-[11px] text-[#4a4e58]">
        {tabs.map(([t, d]) => (
          <div key={t} className="mr-[10px] flex items-center gap-[1px]">
            <svg width="18" height="18" viewBox="0 0 18 18">{d}</svg>
            <span>{t}</span>
          </div>
        ))}
        <div className="-ml-px flex h-[21px] w-[67px] items-center gap-[2px] rounded-b-[3px] border border-t-0 border-[#b8c0c4] bg-linear-to-b from-[#f6f9f6] to-[#dfe5e6] pl-[1px]">
          <svg width="16" height="16" viewBox="0 0 18 18">{ic.rain}</svg>
          <span>Výsledky</span>
        </div>
      </div>
    </div>
  )
}

const cuts = [432, 496.5, 561, 625.5, 690, 754.5, 819, 883.5, 948, 1012, 1077, 1141, 1206, 1270]

function Diagram() {
  return (
    <svg viewBox="314 170 1084 823" className="h-[823px] w-full shrink-0 font-['Liberation_Sans',sans-serif]">
      <rect x="367" y="300" width="968" height="17.5" fill="#ccccE6" stroke="#000080" strokeWidth="1.5" />
      {cuts.map((x) => (
        <path key={x} d={`M${x} 300v17.5`} stroke="#000080" strokeWidth="1.5" />
      ))}
      <text x="852" y="292" fontSize="9" textAnchor="middle" fill="#000080">V 20.000</text>
      <circle cx="851" cy="299" r="1.5" fill="#000080" />

      <rect x="358.5" y="365" width="17" height="257" fill="#9999ff" />
      <rect x="1326" y="365" width="17" height="257" fill="#9999ff" />
      <rect x="362" y="621" width="11" height="4" fill="#80ff80" />
      <rect x="1328" y="621" width="11" height="4" fill="#80ff80" />
      <path d="M367 364.5H1335" stroke="#c8c8e8" strokeWidth="6" />
      <path d="M366 365H1336" stroke="#00009c" strokeWidth="3" />
      <path d="M367 365V622M1334 365V622" stroke="#c00000" strokeWidth="3" />

      <rect x="824" y="357" width="54" height="16" fill="#fbfbf0" />
      <text x="851" y="369.5" fontSize="13" textAnchor="middle" fill="#333">-0.00168</text>

      <path d="M420 622H541M1160 622H1282" stroke="#00ff00" strokeWidth="1.5" />
      <path d="M413 622l8-3.5v7zM1290 622l-8-3.5v7z" fill="#00ff00" />
      <text x="498" y="611.5" fontSize="13.5" textAnchor="middle" fill="#00e000">20.00</text>
      <text x="1245" y="643.5" fontSize="13.5" textAnchor="middle" fill="#00e000">20.00</text>
    </svg>
  )
}

const panes: [string, string][] = [
  ["UCHOP", "w-[47px]"],
  ["RASTR", "w-[45px]"],
  ["KARTEZ", "w-[51px]"],
  ["OUCHOP", "w-[56px]"],
  ["VLINIE", "w-[41px]"],
  ["DXF", "w-[29px]"],
]

export default function App() {
  return (
    <div className="relative flex h-[1050px] w-[1399px] flex-col overflow-hidden border border-b-0 border-[#6e6e6e] bg-[#d0d4dd] font-['Noto_Sans',sans-serif]">
      {/* title bar */}
      <div className="flex h-[30px] items-center bg-white pl-[8px] text-[11.1px] text-[#111]">
        <svg width="17" height="18" viewBox="0 0 17 18" className="mr-[4px]">
          <path d="M3 5l7-4 6 3v8l-8 5-6-4z" fill="#6a7f90" stroke="#333" strokeWidth="0.6" />
          <path d="M9 3l5 3M7 5l5 3" stroke="#c0d0dc" />
          <text x="6" y="15" fontSize="11" fontWeight="700" textAnchor="middle" fill="#e8b020" fontFamily="Liberation Sans">5</text>
        </svg>
        <span>RFEM 5.25.02 x64 - [Prestress (1), ZS2*]</span>
        <div className="ml-auto flex items-center">
          <div className="flex w-[46px] justify-center"><Minus size={14} strokeWidth={1.4} color="#111" /></div>
          <div className="flex w-[46px] justify-center"><Square size={14} strokeWidth={1.5} color="#111" /></div>
          <div className="flex w-[46px] justify-center"><X size={17} strokeWidth={1.3} color="#111" /></div>
        </div>
      </div>
      <MenuBar />
      <Toolbar1 />
      <Toolbar2 />
      <div className="h-px bg-[#8a8e96]" />

      <div className="flex h-[919px] shrink-0">
        <LeftPanel />
        <div className="flex min-w-0 flex-1 flex-col border-l border-[#555] bg-white font-['Liberation_Sans',sans-serif] text-[10.8px] leading-[14px] text-[#111]">
          <div className="h-[62px] pl-[3px] pt-[6px]">
            <p>Rozložení zatížení [-]</p>
            <p>Podporové reakce [kN]</p>
            <p>ZS2 : End prestress</p>
            <p>Zatížení [-], [kN]</p>
          </div>
          <Diagram />
          <div className="pl-[3px]">
            <p>Max FX: 0.00000, Min FX: -0.00168 -</p>
            <p>Max P-X': 20.02, Min P-X': -20.02 kN</p>
          </div>
        </div>
      </div>

      {/* status bar */}
      <div className="flex flex-1 items-center justify-start border-b border-[#555] border-t border-t-white bg-linear-to-b from-[#e2e4e8] via-[#c4c7cc] to-[#a8acb2] pl-[609px] font-['Liberation_Sans',sans-serif] text-[11.5px] text-[#444]">
        {panes.map(([t, w]) => (
          <div
            key={t}
            className={
              t === "RASTR"
                ? `flex h-[18px] items-center pl-[2px] ${w}`
                : `flex h-[18px] items-center border border-[#222] border-r-[#eee] border-b-[#eee] pl-[2px] ${w}`
            }
          >
            {t}
          </div>
        ))}
      </div>

      {/* callout drawn over the navigator and the canvas */}
      <svg className="pointer-events-none absolute left-[-1px] top-[-1px]" width="1399" height="1050" viewBox="0 0 1399 1050">
        <rect x="42.5" y="829.5" width="226" height="39" fill="none" stroke="#ed1c24" strokeWidth="3" />
        <path d="M276 850L836 392" stroke="#ed1c24" strokeWidth="4" />
        <path d="M850 381L826 388 840 402z" fill="#ed1c24" />
      </svg>
    </div>
  )
}
